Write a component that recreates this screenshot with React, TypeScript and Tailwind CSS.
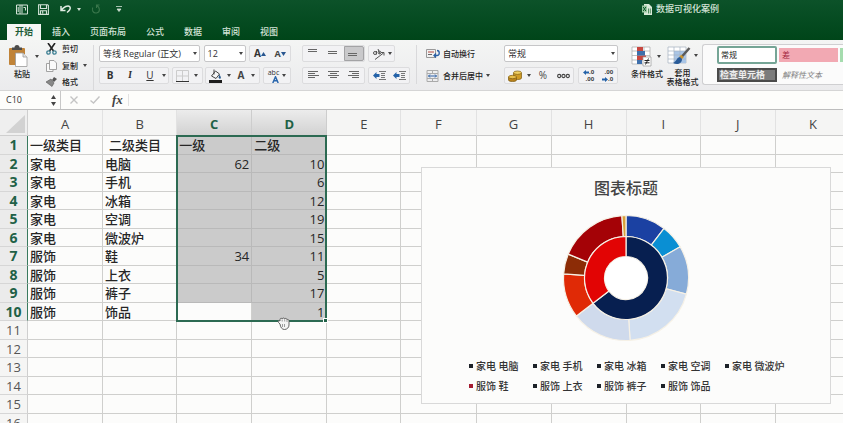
import type { ReactNode } from "react";

const COLUMNS = ["A", "B", "C", "D", "E", "F", "G", "H", "I", "J", "K"];
const COLUMN_WIDTHS = [75, 74, 75, 75, 74, 75, 75, 75, 74, 75, 75];

const ROWS: string[][] = [
  ["一级类目", "二级类目", "一级", "二级"],
  ["家电", "电脑", "62", "10"],
  ["家电", "手机", "", "6"],
  ["家电", "冰箱", "", "12"],
  ["家电", "空调", "", "19"],
  ["家电", "微波炉", "", "15"],
  ["服饰", "鞋", "34", "11"],
  ["服饰", "上衣", "", "5"],
  ["服饰", "裤子", "", "17"],
  ["服饰", "饰品", "", "1"],
  [], [], [], [], [], [],
];

const INNER = [
  { value: 62, color: "#071f50" },
  { value: 34, color: "#e20404" },
];
const OUTER = [
  { value: 10, color: "#1b41a2" },
  { value: 6, color: "#0a8fd3" },
  { value: 12, color: "#86abd8" },
  { value: 19, color: "#d2dff0" },
  { value: 15, color: "#cfdaec" },
  { value: 11, color: "#e02a06" },
  { value: 5, color: "#8c2c06" },
  { value: 17, color: "#a40206" },
  { value: 1, color: "#d9a13a" },
];

const LEGEND = [
  "家电 电脑", "家电 手机", "家电 冰箱", "家电 空调", "家电 微波炉",
  "服饰 鞋", "服饰 上衣", "服饰 裤子", "服饰 饰品",
];

function ringPaths(data: { value: number; color: string }[], r0: number, r1: number) {
  const total = data.reduce((sum, d) => sum + d.value, 0);
  let start = 0;
  return data.map((d, i) => {
    const a = (start / total) * Math.PI * 2;
    start += d.value;
    const b = (start / total) * Math.PI * 2;
    const large = b - a > Math.PI ? 1 : 0;
    const pt = (r: number, t: number) => `${(r * Math.sin(t)).toFixed(2)} ${(-r * Math.cos(t)).toFixed(2)}`;
    return (
      <path
        key={i}
        fill={d.color}
        stroke="#f6f1e6"
        strokeWidth="1.2"
        d={`M${pt(r1, a)}A${r1} ${r1} 0 ${large} 1 ${pt(r1, b)}L${pt(r0, b)}A${r0} ${r0} 0 ${large} 0 ${pt(r0, a)}Z`}
      />
    );
  });
}

function Caret({ light = false }: { light?: boolean }) {
  return (
    <svg width="4" height="3" viewBox="0 0 4 3" className="shrink-0" aria-hidden="true">
      <path d="M0 0h4L2 3z" fill={light ? "#cfe0d3" : "#444"} />
    </svg>
  );
}

function Tool({ label, className = "", children }: { label: string; className?: string; children: ReactNode }) {
  return (
    <button type="button" aria-label={label} className={`flex h-full items-center justify-center ${className}`}>
      {children}
    </button>
  );
}

function ToolBox({ className = "", children }: { className?: string; children: ReactNode }) {
  return (
    <div className={`flex h-[17px] items-center rounded-[2px] border border-[#dcdcde] bg-[#f2f2f4] ${className}`}>
      {children}
    </div>
  );
}

function Dropdown({ label, value, className }: { label: string; value: string; className: string }) {
  return (
    <div className={`relative h-[17px] ${className}`}>
      <select
        aria-label={label}
        defaultValue={value}
        className="block h-full w-full appearance-none rounded-[2px] border border-[#c6c6c8] bg-white pl-[3px] text-[9px] leading-[15px] text-[#333]"
      >
        <option>{value}</option>
      </select>
      <span className="pointer-events-none absolute inset-y-0 right-[3px] flex items-center">
        <Caret />
      </span>
    </div>
  );
}

function Lines({ widths, align = "start" }: { widths: number[]; align?: "start" | "middle" | "end" }) {
  return (
    <svg width="11" height={widths.length * 2 + 1} viewBox={`0 0 11 ${widths.length * 2 + 1}`} stroke="#666" aria-hidden="true">
      {widths.map((w, i) => {
        const x = align === "start" ? 0 : align === "end" ? 11 - w : (11 - w) / 2;
        return <path key={i} d={`M${x} ${i * 2 + 0.5}h${w}`} />;
      })}
    </svg>
  );
}

function TitleBar() {
  return (
    <div className="flex h-6 items-start pt-[3px] pl-4">
      <div className="flex h-3 items-center">
        <button type="button" aria-label="侧边栏">
          <svg width="12" height="11" viewBox="0 0 12 11" fill="none" stroke="#d3e3d7" strokeWidth="1">
            <path d="M.5 1h11v9H.5zM4 1v9M2.2 3v5M6 1v8.500M7.500 3.500h2v3" />
          </svg>
        </button>
        <button type="button" aria-label="保存" className="ml-[10px]">
          <svg width="11" height="11" viewBox="0 0 11 11" fill="none" stroke="#d3e3d7" strokeWidth="1.1">
            <path d="M.6.8h9l.8.8v8.800H.6zM2.500 1v3.500h6V1M2.500 10V6.800h6V10M4.700 7v2.500" />
          </svg>
        </button>
        <button type="button" aria-label="撤销" className="ml-[11px] flex items-center gap-[5px]">
          <svg width="12" height="10" viewBox="0 0 12 10" fill="none" stroke="#e0ece3" strokeWidth="1.5">
            <path d="M1 2v4.500h4.500M1.200 6.300C3.500 3 8 .8 9.800 2.700c1.500 1.800-.6 4-2.800 5.800" />
          </svg>
          <Caret light />
        </button>
        <button type="button" aria-label="重做" disabled className="ml-[10px]">
          <svg width="10" height="10" viewBox="0 0 10 10" fill="none" stroke="#39764b" strokeWidth="1.1">
            <path d="M8.500 1H5.500v3M5.500 1.500C9 3 9.700 8 5.500 9 2 9.500.5 6 1.800 3.500" />
          </svg>
        </button>
        <button type="button" aria-label="自定义工具栏" className="ml-[15px]">
          <svg width="6" height="6" viewBox="0 0 6 6">
            <path d="M0 .5h6M1 3h4L3 5.500z" stroke="#cfe0d3" strokeWidth=".8" fill="#cfe0d3" />
          </svg>
        </button>
      </div>
      <h1 className="mr-[124px] ml-auto flex h-3 items-center gap-1 text-[9px] leading-3 font-medium text-[#d4e3d7]">
        <svg width="10" height="11" viewBox="0 0 10 11" aria-hidden="true">
          <path d="M2 0h5l3 3v8H2z" fill="#d9ead9" />
          <path d="M0 1.500h5v7H0z" fill="#9cc7a2" />
          <path d="m1.200 3 2.600 4M3.800 3 1.200 7" stroke="#0b5a2a" />
          <path d="M6.500 4.500v5M8.300 4.500v5" stroke="#4f8d5f" />
        </svg>
        数据可视化案例
      </h1>
    </div>
  );
}

function Tabs() {
  const tabs = ["插入", "页面布局", "公式", "数据", "审阅", "视图"];
  return (
    <nav className="flex h-4 items-stretch pl-[7px] text-[9px] leading-4">
      <button type="button" aria-current="page" className="mr-px bg-[#f6f7f5] px-2 font-bold text-[#1c5c36]">
        开始
      </button>
      {tabs.map((t) => (
        <button key={t} type="button" className="px-[10px] font-medium text-[#d2e2d6]">
          {t}
        </button>
      ))}
    </nav>
  );
}

function ClipboardGroup() {
  return (
    <div className="flex w-[94px] shrink-0 border-r border-[#d9d9db] pl-[9px]">
      <button type="button" className="flex w-[30px] flex-col items-start text-[8px] leading-[10px] font-medium text-[#222]">
        <span className="flex w-full items-center justify-between">
          <svg width="19" height="22" viewBox="0 0 19 22" aria-hidden="true">
            <rect y="3" width="16" height="17" rx="1" fill="#c08338" />
            <path d="M3 5V2.500h2.500a2.500 2.500 0 0 1 5 0H13V5z" fill="#4a4a4a" />
            <path d="M6.500 8H14l4 4v9.500H6.500z" fill="#fff" stroke="#9a9a9a" strokeWidth=".8" />
            <path d="M14 8v4h4" fill="#e3e3e3" stroke="#9a9a9a" strokeWidth=".8" />
          </svg>
          <Caret />
        </span>
        <span className="mt-[2px] ml-[5px]">粘贴</span>
      </button>
      <div className="-mt-1 ml-[7px] flex flex-col text-[8px] leading-4 font-medium text-[#222]">
        <button type="button" className="flex h-4 items-center gap-[5px]">
          <svg width="11" height="12" viewBox="0 0 11 12" fill="none" aria-hidden="true">
            <path d="m2 0 5.500 8M9 0 3.500 8" stroke="#222" strokeWidth="1.600" />
            <circle cx="2.500" cy="9.500" r="1.700" stroke="#3c7f93" strokeWidth="1.300" />
            <circle cx="8.500" cy="9.500" r="1.700" stroke="#3c7f93" strokeWidth="1.300" />
          </svg>
          剪切
        </button>
        <button type="button" className="flex h-[17px] items-center gap-[5px]">
          <svg width="11" height="12" viewBox="0 0 11 12" fill="#fafafa" stroke="#999" strokeWidth=".9" aria-hidden="true">
            <path d="M.5 3.500h4L7 6v5.500H.5z" />
            <path d="M3.500.5H8L10.500 3v6.500h-7z" />
          </svg>
          复制
          <Caret />
        </button>
        <button type="button" className="flex h-4 items-center gap-[5px]">
          <svg width="11" height="10" viewBox="0 0 11 10" aria-hidden="true">
            <path d="M8 0 11 2 8 5 6 3z" fill="#555" />
            <path d="m5 2 3 4-2 3.500L0 5z" fill="#888" stroke="#555" strokeWidth=".6" />
          </svg>
          格式
        </button>
      </div>
    </div>
  );
}

function FontGroup() {
  return (
    <div className="ml-[5px] flex w-[192px] shrink-0 flex-col gap-[5px]">
      <div className="flex justify-between">
        <Dropdown label="字体" value="等线 Regular (正文)" className="w-[101px]" />
        <Dropdown label="字号" value="12" className="w-[42px]" />
        <ToolBox className="w-[42px]">
          <Tool label="增大字号" className="w-1/2 text-[10px] font-bold text-[#333]">
            A
            <svg width="5" height="4" viewBox="0 0 5 4"><path d="M0 4h5L2.500 0z" fill="#28558f" /></svg>
          </Tool>
          <Tool label="减小字号" className="w-1/2 text-[9px] font-bold text-[#444]">
            A
            <svg width="5" height="4" viewBox="0 0 5 4"><path d="M0 0h5L2.500 4z" fill="#28558f" /></svg>
          </Tool>
        </ToolBox>
      </div>
      <div className="flex justify-between">
        <ToolBox className="w-[70px] text-[10px] text-[#333]">
          <Tool label="加粗" className="w-5 font-bold">B</Tool>
          <Tool label="倾斜" className="w-5 font-serif font-bold italic">I</Tool>
          <Tool label="下划线" className="w-5 font-medium underline">U</Tool>
          <Tool label="下划线选项" className="w-2"><Caret /></Tool>
        </ToolBox>
        <ToolBox className="w-[31px]">
          <Tool label="边框" className="w-full gap-[5px]">
            <svg width="13" height="12" viewBox="0 0 13 12" fill="none">
              <path d="M.5 11V.5h12V11M6.500 1v10M1 6h11" stroke="#ccc" />
              <path d="M0 11.500h13" stroke="#333" />
            </svg>
            <Caret />
          </Tool>
        </ToolBox>
        <ToolBox className="w-[55px]">
          <Tool label="填充颜色" className="w-1/2 gap-[5px]">
            <svg width="13" height="14" viewBox="0 0 13 14">
              <path d="m2.500 7 4-5 4 3-3.500 4.500z" fill="#f5f5f5" stroke="#444" />
              <path d="M5 .5v5" stroke="#444" />
              <path d="M10.500 5.500q2 3 1 4t-2-1z" fill="#27598d" />
              <path d="M0 11h13v3H0z" fill="#1d1d1d" />
            </svg>
            <Caret />
          </Tool>
          <Tool label="字体颜色" className="w-1/2 gap-[6px] text-[10px] font-bold text-[#444]">
            <span className="border-b-2 border-[#f4f4f4] leading-3">A</span>
            <Caret />
          </Tool>
        </ToolBox>
        <ToolBox className="w-[28px]">
          <Tool label="拼音指南" className="w-full gap-[3px] text-[7px] leading-[7px] text-[#333]">
            <span className="flex flex-col items-end">
              abc
              <svg width="7" height="7" viewBox="0 0 7 7" fill="none" stroke="#2a67ad" strokeWidth="1.500">
                <path d="M.8 7 3.500.8 6.200 7M1.800 4.800h3.400" />
              </svg>
            </span>
            <Caret />
          </Tool>
        </ToolBox>
      </div>
    </div>
  );
}

function IndentIcon() {
  return (
    <svg width="13" height="9" viewBox="0 0 13 9">
      <path d="M6 .5h7M8 2.500h4M8 4.500h4M8 6.500h4M6 8.500h7" stroke="#777" />
      <path d="M0 4.500 3.500 1v2H6.500v3H3.500v2z" fill="#2462a8" />
    </svg>
  );
}

function AlignGroup() {
  return (
    <div className="ml-[11px] flex w-[115px] shrink-0 flex-col gap-[5px] border-r border-[#d9d9db]">
      <div className="flex gap-[3px]">
        <ToolBox className="w-[63px]">
          <Tool label="顶端对齐" className="w-1/3 pb-1"><Lines widths={[9, 9]} /></Tool>
          <Tool label="垂直居中" className="w-1/3"><Lines widths={[9, 9]} /></Tool>
          <Tool label="底端对齐" className="w-1/3 rounded-r-[2px] border border-[#a3a3a5] bg-[#c9c9cb] pt-1"><Lines widths={[9, 9]} /></Tool>
        </ToolBox>
        <ToolBox className="w-[27px]">
          <Tool label="方向" className="w-full gap-[3px] text-[8px] text-[#444]">
            <svg width="13" height="12" viewBox="0 0 13 12">
              <g fill="none" stroke="#555">
                <circle cx="3" cy="5" r="1.500" /><path d="M4.500 3v3.500M6 1l2 5" /><circle cx="7.500" cy="4.500" r="1.400" />
                <path d="M3 11.500 11.500 5M9 4.500h3v3" />
              </g>
            </svg>
            <Caret />
          </Tool>
        </ToolBox>
      </div>
      <div className="flex gap-[3px]">
        <ToolBox className="w-[63px]">
          <Tool label="左对齐" className="w-1/3"><Lines widths={[10, 7, 11, 7]} /></Tool>
          <Tool label="居中" className="w-1/3"><Lines widths={[11, 7, 11, 7]} align="middle" /></Tool>
          <Tool label="右对齐" className="w-1/3"><Lines widths={[10, 7, 11, 7]} align="end" /></Tool>
        </ToolBox>
        <ToolBox className="w-[42px]">
          <Tool label="减少缩进" className="w-1/2"><IndentIcon /></Tool>
          <Tool label="增加缩进" className="w-1/2"><IndentIcon /></Tool>
        </ToolBox>
      </div>
    </div>
  );
}

function WrapGroup() {
  return (
    <div className="ml-[9px] flex w-[78px] shrink-0 flex-col gap-[5px] text-[8px] font-medium text-[#222]">
      <button type="button" className="flex h-[17px] items-center gap-[3px]">
        <svg width="14" height="10" viewBox="0 0 14 10" fill="none" aria-hidden="true">
          <path d="M.5.5h9v8h-9z" stroke="#999" />
          <path d="M2 3h6" stroke="#b4473e" />
          <path d="M2 5.500h4" stroke="#666" />
          <path d="M11 1.500c3 0 3 5 0 5H8.500M10 4.500l-2 2 2 2" stroke="#2a5fa5" strokeWidth="1.300" />
        </svg>
        自动换行
      </button>
      <button type="button" className="flex h-[17px] items-center gap-[3px]">
        <svg width="14" height="12" viewBox="0 0 14 12" fill="none" aria-hidden="true">
          <path d="M1 .5h11v11H1zM1 3.500h11M1 8.500h11M6.500.5v3M6.500 8.500v3" stroke="#aaa" />
          <path d="M2.500 6h8M4 4.500 2.500 6 4 7.500M9 4.500 10.500 6 9 7.500" stroke="#2a5fa5" />
        </svg>
        合并后居中
        <Caret />
      </button>
    </div>
  );
}

function NumberGroup() {
  return (
    <div className="flex w-[114px] shrink-0 flex-col gap-[5px]">
      <Dropdown label="数字格式" value="常规" className="w-full" />
      <div className="flex justify-between text-[#444]">
        <ToolBox className="w-[70px]">
          <Tool label="会计格式" className="w-7 gap-[5px]">
            <svg width="14" height="12" viewBox="0 0 14 12" stroke="#7c5a10" strokeWidth=".7">
              <path d="M5.500 3v5c0 2 8 2 8 0V3z" fill="#cf9a25" />
              <ellipse cx="9.500" cy="2.700" rx="4" ry="1.700" fill="#f0cf62" />
              <path d="M.5 7v3c0 2 8 2 8 0V7z" fill="#b9821b" />
              <ellipse cx="4.500" cy="7" rx="4" ry="1.700" fill="#e7be4c" />
            </svg>
            <Caret />
          </Tool>
          <Tool label="百分比" className="w-5 text-[10px] font-medium">%</Tool>
          <Tool label="千位分隔" className="w-5">
            <svg width="13" height="6" viewBox="0 0 13 6" fill="none" stroke="#444" strokeWidth="1.100">
              <circle cx="2.200" cy="3" r="1.600" /><circle cx="6.500" cy="3" r="1.600" /><circle cx="10.800" cy="3" r="1.600" />
            </svg>
          </Tool>
        </ToolBox>
        <ToolBox className="w-[40px] text-[6px] leading-[7px] font-bold">
          <Tool label="增加小数位" className="w-1/2">
            <span className="flex flex-col items-end">
              <span className="flex items-center"><svg width="6" height="5" viewBox="0 0 6 5"><path d="M0 2.500 3 0v1.500h3v2H3V5z" fill="#2462a8" /></svg>.0</span>
              <span>.00</span>
            </span>
          </Tool>
          <Tool label="减少小数位" className="w-1/2">
            <span className="flex flex-col items-end">
              <span>.00</span>
              <span className="flex items-center"><svg width="6" height="5" viewBox="0 0 6 5"><path d="M6 2.500 3 0v1.500H0v2h3V5z" fill="#2462a8" /></svg>.0</span>
            </span>
          </Tool>
        </ToolBox>
      </div>
    </div>
  );
}

function StylesGroup() {
  return (
    <>
      <button type="button" className="ml-[13px] flex w-[31px] shrink-0 flex-col text-[8px] leading-[10px] font-medium whitespace-nowrap text-[#222]">
        <span className="flex items-center gap-[5px]">
          <svg width="21" height="22" viewBox="0 0 21 22" aria-hidden="true">
            <path d="M1 2h18v17H1z" fill="#fff" stroke="#aaa" strokeWidth=".7" />
            <path d="M7 2v17M13 2v17M1 6h18M1 10.500h18M1 15h18" stroke="#aaa" strokeWidth=".7" />
            <path d="M6 2h6v4H6zM6 10.500h9V15H6z" fill="#c8473f" />
            <path d="M6 6h8v4.500H6zM6 15h5v4H6z" fill="#3e6fab" />
            <path d="M12 12h8v9h-8z" fill="#fff" stroke="#999" strokeWidth=".7" />
            <path d="M13.500 15.500h5M13.500 17.800h5M17.500 13.500l-3 6" stroke="#222" />
          </svg>
          <Caret />
        </span>
        <span className="mt-[2px]">条件格式</span>
      </button>
      <button type="button" className="ml-[5px] flex w-[31px] shrink-0 flex-col items-center text-[8px] leading-[9px] font-medium whitespace-nowrap text-[#222]">
        <span className="flex items-center gap-[3px]">
          <svg width="24" height="21" viewBox="0 0 24 21" aria-hidden="true">
            <path d="M1 2h18v16H1z" fill="#fff" stroke="#a5afbd" strokeWidth=".7" />
            <path d="M7 6h12v12H7z" fill="#a9c5e6" />
            <path d="M7 2v16M13 2v16M1 6h18M1 10h18M1 14h18" stroke="#a5b1c2" strokeWidth=".7" />
            <path d="m22.500 3-8 9" stroke="#5a5a5a" strokeWidth="2.500" />
            <path d="m15.500 11-2 2" stroke="#c9932e" strokeWidth="3.500" />
            <path d="M13 12c-3 0-3 4-7 6 4 2 9 1 9-4z" fill="#2a5b98" />
          </svg>
          <Caret />
        </span>
        <span className="mt-[2px]">套用</span>
        <span>表格格式</span>
      </button>
      <div className="-mt-px ml-[4px] flex h-[41px] min-w-0 flex-1 gap-[2px] overflow-hidden rounded-l-[3px] border border-r-0 border-[#cfcfd1] bg-[#fbfbfb] pt-px pl-[14px] text-[9px]">
        <div className="flex w-[60px] shrink-0 flex-col gap-1">
          <button type="button" className="h-[18px] rounded-[2px] border-2 border-[#75a596] bg-white pl-[2px] text-left text-[8px] text-[#222]">常规</button>
          <button type="button" className="h-[14px] border-2 border-[#4a4a4a] bg-[#7c7c7c] pl-px text-left leading-[10px] font-bold whitespace-nowrap text-[#eee]">检查单元格</button>
        </div>
        <div className="flex w-[59px] shrink-0 flex-col gap-[6px] pt-[2px]">
          <button type="button" className="h-[14px] bg-[#f2a9b3] pl-[3px] text-left text-[8px] text-[#a3263c]">差</button>
          <button type="button" className="h-[14px] pl-[3px] text-left text-[8px] leading-[14px] whitespace-nowrap text-[#808080] italic">解释性文本</button>
        </div>
        <button type="button" aria-label="好" className="mt-[2px] h-[14px] flex-1 bg-[#a5dcae]" />
      </div>
    </>
  );
}

function FormulaBar() {
  return (
    <div className="flex h-[20px] shrink-0 items-center border-t border-b border-t-[#d5d5d5] border-b-[#bdbdbd] bg-[#fdfdfb]">
      <div className="flex h-full w-[61px] items-center justify-between border-r border-[#c8c8c8] pr-1">
        <input aria-label="名称框" defaultValue="C10" className="w-10 bg-transparent pl-[6px] text-[9px] leading-4 text-[#333]" />
        <svg width="5" height="11" viewBox="0 0 5 11" fill="#444" aria-hidden="true">
          <path d="M0 4h5L2.500 0zM0 7h5l-2.500 4z" />
        </svg>
      </div>
      <button type="button" aria-label="取消" className="ml-[9px]">
        <svg width="8" height="8" viewBox="0 0 8 8" stroke="#c4c4c4" strokeWidth="1.400"><path d="m.5.5 7 7m0-7-7 7" /></svg>
      </button>
      <button type="button" aria-label="输入" className="ml-3">
        <svg width="10" height="8" viewBox="0 0 10 8" fill="none" stroke="#c4c4c4" strokeWidth="1.400"><path d="m.5 4.500 3 2.500L9.500.5" /></svg>
      </button>
      <button type="button" aria-label="插入函数" className="ml-3 font-['Liberation_Serif',serif] text-[13px] leading-4 font-bold text-[#444] italic">fx</button>
      <input aria-label="编辑栏" className="ml-[5px] h-3 min-w-0 flex-1 border-l border-[#e2e2e2] bg-transparent text-[9px]" />
    </div>
  );
}

function Sheet() {
  return (
    <table className="w-[851px] table-fixed border-separate border-spacing-0 text-[13px] leading-4 text-[#262626]">
      <colgroup>
        <col className="w-[28px]" />
        {COLUMN_WIDTHS.map((w, i) => (
          <col key={i} style={{ width: w }} />
        ))}
      </colgroup>
      <thead>
        <tr className="h-[26px]">
          <th aria-label="全选" className="border-r border-b border-[#cfcfcf] bg-[#efefef] p-0">
            <svg width="20" height="20" viewBox="0 0 20 20" className="mt-[2px] ml-[6px] block" aria-hidden="true">
              <path d="M19 1v18H0z" fill="#d2d2d2" />
            </svg>
          </th>
          {COLUMNS.map((c) => {
            const selected = c === "C" || c === "D";
            return (
              <th
                key={c}
                scope="col"
                className={`border-r border-b p-0 pt-[2px] ${
                  selected
                    ? "border-[#cdcdcd] bg-linear-to-b from-[#ececec] to-[#d2d2d2] font-bold text-[#1f6147]"
                    : "border-r-[#e2e2e2] border-b-[#c9c9c9] bg-[#f5f5f4] font-normal text-[#444]"
                }`}
              >
                {c}
              </th>
            );
          })}
        </tr>
      </thead>
      <tbody>
        {ROWS.map((row, r) => {
          const inRange = r < 10;
          return (
            <tr key={r} className="h-[19px] even:h-[18px]">
              <th
                scope="row"
                className={`border-r border-b border-b-[#d6d6d6] p-0 ${
                  inRange
                    ? "border-r-[#3a7a5f] bg-[#ebebeb] text-[14px] font-bold text-[#1f6147]"
                    : "border-r-[#cfcfcf] bg-[#f5f5f4] font-normal text-[#555]"
                }`}
              >
                {r + 1}
              </th>
              {COLUMNS.map((c, i) => {
                const shaded = inRange && (i === 3 || (i === 2 && r < 9));
                const numeric = i > 1 && r > 0;
                return (
                  <td
                    key={c}
                    className={`overflow-hidden border-r border-b p-0 whitespace-nowrap ${
                      shaded ? "border-[#b9b9b9] bg-[#cbcbcb]" : "border-[#cfcfcd]"
                    } ${numeric ? "pr-[2px] text-right" : r === 0 && i === 1 ? "pl-[6px]" : "pl-[2px]"} ${i < 2 || r === 0 ? "font-medium" : ""}`}
                  >
                    {row[i] ?? ""}
                  </td>
                );
              })}
            </tr>
          );
        })}
      </tbody>
    </table>
  );
}

function Chart() {
  return (
    <figure className="absolute top-[57px] left-[421px] flex h-[237px] w-[410px] flex-col items-center border border-[#d9d9d9] bg-[#fcfcfb]">
      <figcaption className="mt-2 text-[16px] leading-6 font-medium text-[#444]">图表标题</figcaption>
      <svg width="130" height="130" viewBox="-65 -65 130 130" className="mt-[13px]" role="img" aria-label="图表标题">
        {ringPaths(OUTER, 41.5, 62.5)}
        {ringPaths(INNER, 21.5, 41.5)}
        <circle r="21" fill="#fff" />
      </svg>
      <ul className="mt-[15px] grid grid-cols-[repeat(5,64px)] gap-y-1 pl-[6px] text-[10px] leading-4 font-medium text-[#333]">
        {LEGEND.map((name, i) => (
          <li key={name} className="flex items-center gap-[3px] whitespace-nowrap">
            <span className={`size-1 ${i === 5 ? "bg-[#a51c30]" : "bg-[#1d2228]"}`} />
            {name}
          </li>
        ))}
      </ul>
    </figure>
  );
}

export default function App() {
  return (
    <main className="flex h-screen flex-col overflow-hidden bg-[#fcfcfb] font-['Open_Sans','Noto_Sans_CJK_SC',sans-serif]">
      <header className="h-10 shrink-0 bg-linear-to-b from-[#0c5229] to-[#004519]">
        <TitleBar />
        <Tabs />
      </header>
      <section aria-label="功能区" className="flex h-[50px] shrink-0 items-start bg-linear-to-b from-[#f4f5f4] to-[#ebebed] pt-[5px]">
        <ClipboardGroup />
        <FontGroup />
        <AlignGroup />
        <WrapGroup />
        <NumberGroup />
        <StylesGroup />
      </section>
      <FormulaBar />
      <section aria-label="工作表" className="relative min-h-0 flex-1 overflow-hidden">
        <Sheet />
        <div className="pointer-events-none absolute top-[25px] left-[176px] h-[187px] w-[151px] border-2 border-[#2c6a52]">
          <span className="absolute -right-[3px] -bottom-[3px] size-[5px] border border-white bg-[#1f6147]" />
        </div>
        <Chart />
        <svg className="pointer-events-none absolute top-[207px] left-[277px]" width="13" height="13" viewBox="0 0 13 13" aria-hidden="true">
          <path
            d="M3 7 1.500 5.500C.5 4 2 3 3 4V2.500C3 1 5 1 5.200 2 5.500.7 7.500.7 7.700 2c.5-1 2.200-.7 2.300.7.8-.8 2 0 2 1V8c0 2.500-2 4.500-4.500 4.500C5 12.500 3.500 10.500 3 7z"
            fill="#f4f4f4"
            stroke="#555"
            strokeWidth=".9"
          />
          <path d="M5.200 2.500v2M7.700 2.500v2M10 3v2M5.500 7v3M7.500 7v3" stroke="#777" strokeWidth=".7" />
        </svg>
      </section>
    </main>
  );
}
